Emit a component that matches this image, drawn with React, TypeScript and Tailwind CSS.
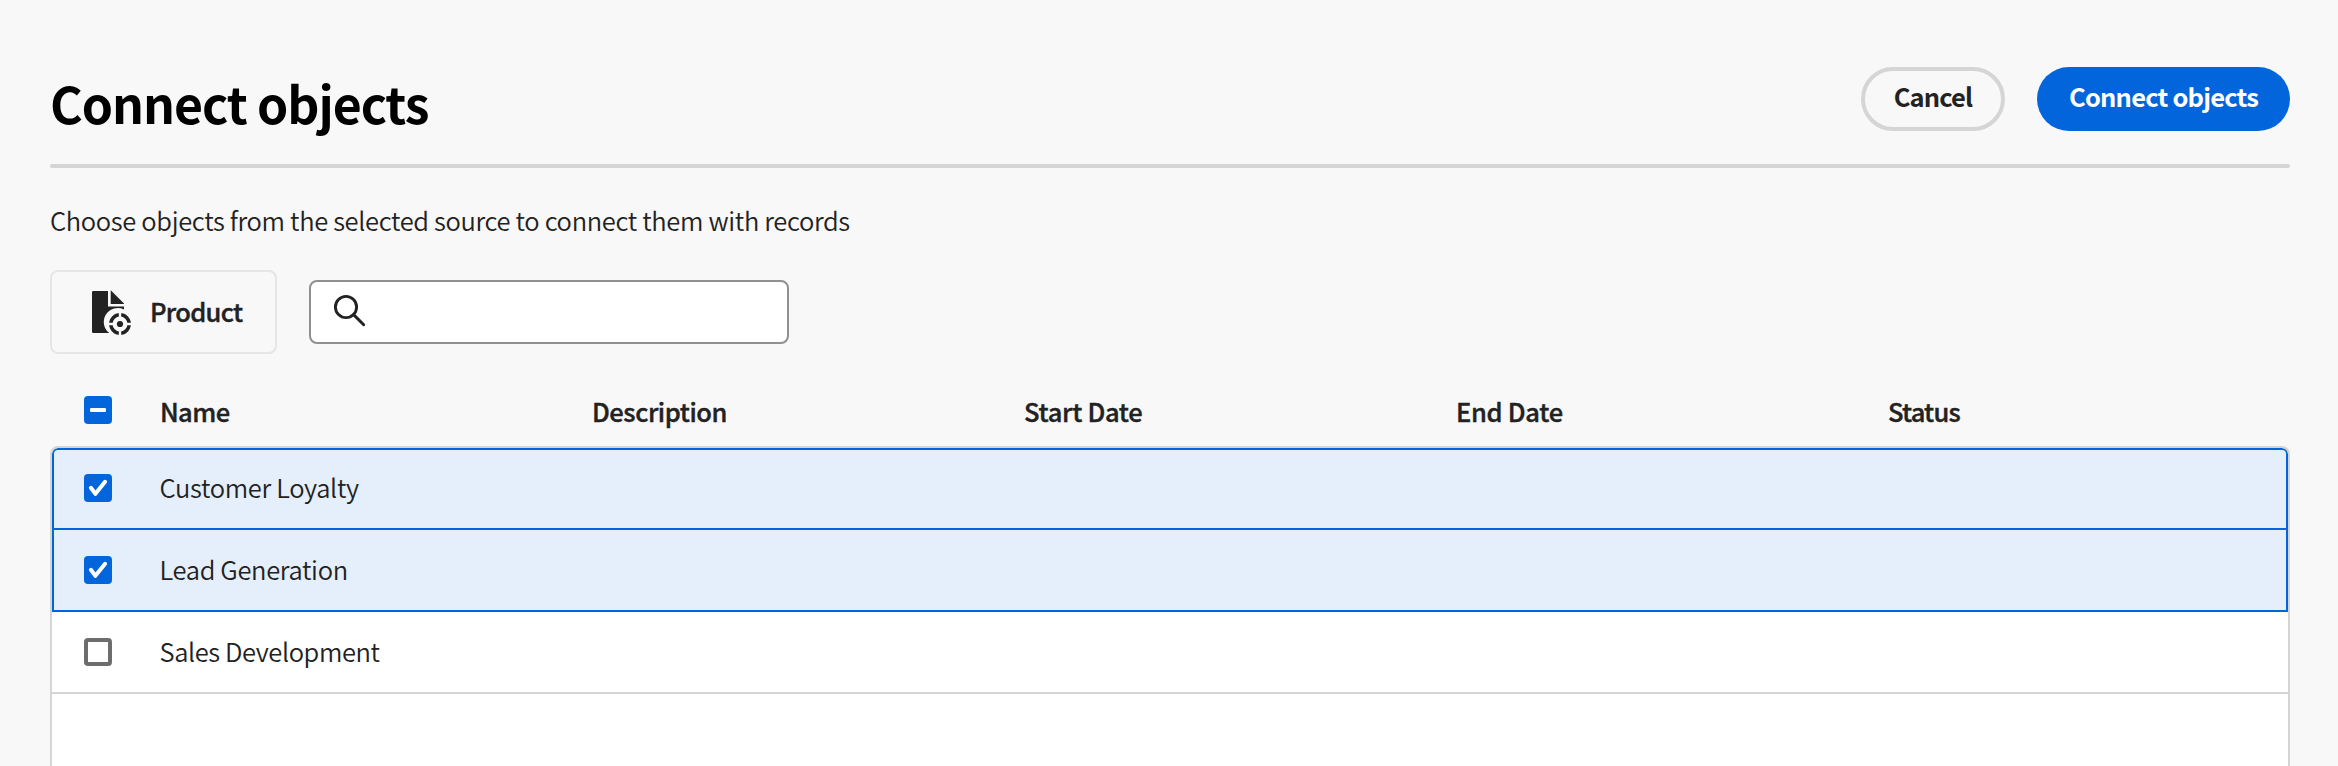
import type { ReactNode } from "react";

type CheckState = "checked" | "mixed" | "empty";

function Checkbox({ state }: { state: CheckState }) {
  if (state === "empty") {
    return <span role="checkbox" aria-checked="false" className="block size-7 rounded border-4 border-[#6d6d6d] bg-white" />;
  }
  return (
    <span
      role="checkbox"
      aria-checked={state === "mixed" ? "mixed" : "true"}
      className="block size-7 rounded bg-[#0265dc]"
    >
      <svg viewBox="0 0 28 28" className="block size-7" fill="none">
        {state === "mixed" ? (
          <rect x="6" y="12" width="16" height="4" rx="1.2" fill="#fff" />
        ) : (
          <path d="M6.9 13.8 11.4 19.8 21.1 7.8" stroke="#fff" strokeWidth="4" strokeLinecap="round" strokeLinejoin="round" />
        )}
      </svg>
    </span>
  );
}

function ProductIcon() {
  return (
    <svg viewBox="0 0 44 46" className="block h-[46px] w-11" fill="#222">
      <path d="M1.3 2H16v15.6h16v2.8A14 14 0 0 0 17.2 44H1.3A1.3 1.3 0 0 1 0 42.7V3.3A1.3 1.3 0 0 1 1.3 2Z" />
      <path d="M18.7 1.6h.3L32 14.600v.400H18.7Z" />
      <circle cx="28" cy="35" r="3.1" />
      <circle cx="28" cy="35" r="9.2" fill="none" stroke="#222" strokeWidth="3.4" />
      <path d="M28 22.8v7.5M28 39.8v7.5M15.8 35h7.5M32.7 35h7.5" stroke="#f8f8f8" strokeWidth="2.4" />
    </svg>
  );
}

function SearchIcon() {
  return (
    <svg viewBox="0 0 34 34" className="block size-[34px]" fill="none" stroke="#222" strokeWidth="2.9">
      <circle cx="13" cy="13" r="10.6" />
      <path d="M20.6 20.6 30.7 30.7" strokeLinecap="round" />
    </svg>
  );
}

const columns = [
  { label: "Name", spacing: "tracking-[-0.6px]" },
  { label: "Description", spacing: "tracking-[-0.45px]" },
  { label: "Start Date", spacing: "tracking-[-0.3px]" },
  { label: "End Date", spacing: "tracking-[-0.3px]" },
  { label: "Status", spacing: "tracking-[-0.8px]" },
];

const rows = [
  { name: "Customer Loyalty", selected: true, spacing: "tracking-[-0.34px]" },
  { name: "Lead Generation", selected: true, spacing: "tracking-[-0.34px]" },
  { name: "Sales Development", selected: false, spacing: "tracking-[-0.4px]" },
];

function Label({ className, children }: { className: string; children: ReactNode }) {
  return <span className={`whitespace-nowrap text-[25.5px] leading-8 ${className}`}>{children}</span>;
}

const semi = "font-medium [-webkit-text-stroke:0.4px_currentColor]";

export default function App() {
  return (
    <main className="flex h-[766px] flex-col overflow-hidden bg-[#f8f8f8] pr-12 pl-[50px] font-['Noto_Sans_CJK_SC','Noto_Sans',sans-serif] text-[#222]">
      <header className="mt-[67px] flex h-[65px] shrink-0 justify-between">
        <h1 className="pt-[5px] text-[50px] leading-[60px] font-bold tracking-[-1.05px] whitespace-nowrap text-black">
          Connect objects
        </h1>
        <div className="flex gap-8">
          <button className="flex h-16 w-36 justify-center rounded-full border-4 border-[#d5d5d5] pt-[8.5px]">
            <Label className="font-bold tracking-[-0.85px]">Cancel</Label>
          </button>
          <button className="flex h-16 w-[253px] justify-center rounded-full bg-[#0265dc] pt-[12.5px] text-white">
            <Label className="font-bold tracking-[-0.8px]">Connect objects</Label>
          </button>
        </div>
      </header>
      <hr className="mt-8 h-1 shrink-0 rounded-sm border-0 bg-[#d5d5d5]" />
      <p className="mt-9 text-[25.5px] leading-8 font-[350] tracking-[-0.34px]">
        Choose objects from the selected source to connect them with records
      </p>
      <div className="mt-[34px] flex shrink-0 items-center gap-8">
        <div className="flex h-[84px] w-[227px] rounded-lg border-2 border-[#e6e6e6] pt-[17px] pl-10">
          <ProductIcon />
          <Label className={`mt-[6px] ml-[14px] tracking-[-0.7px] ${semi}`}>Product</Label>
        </div>
        <div className="flex h-16 w-[480px] rounded-lg border-2 border-[#909090] bg-white pt-3 pl-[22px]">
          <SearchIcon />
        </div>
      </div>
      <div className="flex h-[92px] shrink-0 pt-[41px]">
        <div className="w-[110px] shrink-0 pt-px pl-[34px]">
          <Checkbox state="mixed" />
        </div>
        {columns.map((c) => (
          <div key={c.label} className="w-[432px] shrink-0">
            <Label className={`block ${c.spacing} ${semi}`}>{c.label}</Label>
          </div>
        ))}
      </div>
      <div className="-mb-4 flex-1 overflow-hidden rounded-t-lg border-2 border-[#d5d5d5] bg-white">
        {rows.map((r, i) => (
          <div
            key={r.name}
            className={`flex border-b-2 ${i === 0 ? "h-[82px] rounded-t-md border-t-2 pt-6" : "h-[82px] pt-[26px]"} ${
              r.selected ? "border-x-2 border-[#0265dc] bg-[#e5effb] pl-[30px]" : "border-[#d5d5d5] pl-8"
            }`}
          >
            <div className="w-[75.5px]">
              <Checkbox state={r.selected ? "checked" : "empty"} />
            </div>
            <Label className={`-mt-[3px] font-[350] ${r.spacing}`}>{r.name}</Label>
          </div>
        ))}
      </div>
    </main>
  );
}
